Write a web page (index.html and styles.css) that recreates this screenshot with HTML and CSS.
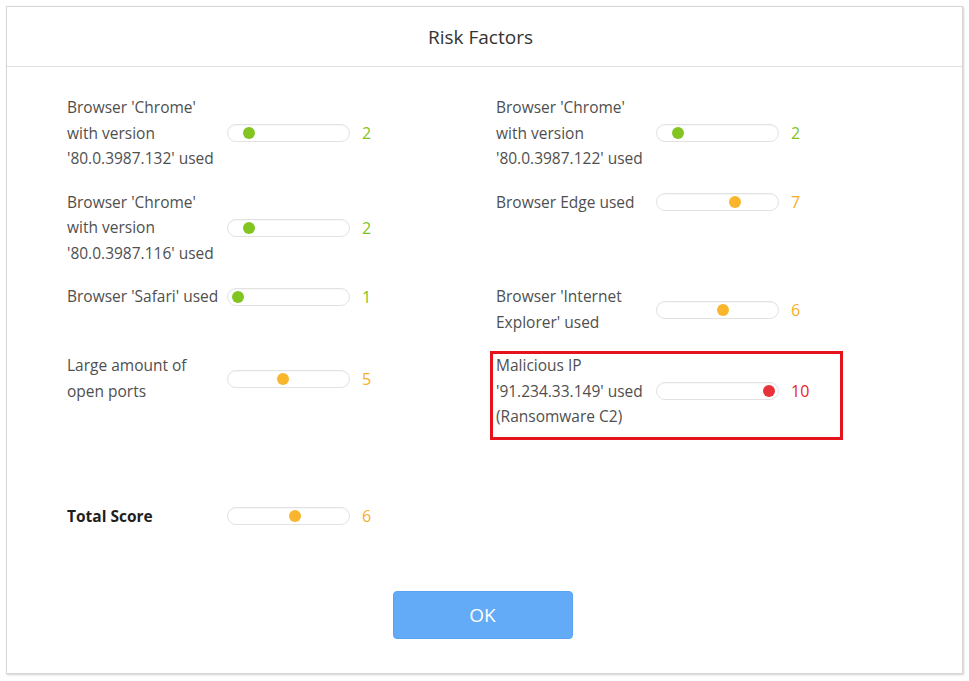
FILE: index.html
```html
<!DOCTYPE html>
<html>
<head>
<meta charset="utf-8">
<link rel="stylesheet" href="styles.css">
</head>
<body>
<div class="modal">
  <div class="modal-header">Risk Factors</div>
  <div class="modal-body">
    <div class="grid">
      <div class="factor">
        <div class="label">Browser 'Chrome' with version '80.0.3987.132' used</div>
        <div class="track"><span class="dot green" style="left:15px"></span></div>
        <div class="value green-t">2</div>
      </div>
      <div class="factor">
        <div class="label">Browser 'Chrome' with version '80.0.3987.122' used</div>
        <div class="track"><span class="dot green" style="left:15px"></span></div>
        <div class="value green-t">2</div>
      </div>
      <div class="factor">
        <div class="label">Browser 'Chrome' with version '80.0.3987.116' used</div>
        <div class="track"><span class="dot green" style="left:15px"></span></div>
        <div class="value green-t">2</div>
      </div>
      <div class="factor">
        <div class="label">Browser Edge used</div>
        <div class="track"><span class="dot orange" style="left:72px"></span></div>
        <div class="value orange-t">7</div>
      </div>
      <div class="factor">
        <div class="label">Browser 'Safari' used</div>
        <div class="track"><span class="dot green" style="left:4px"></span></div>
        <div class="value green-t">1</div>
      </div>
      <div class="factor">
        <div class="label">Browser 'Internet Explorer' used</div>
        <div class="track"><span class="dot orange" style="left:60px"></span></div>
        <div class="value orange-t">6</div>
      </div>
      <div class="factor">
        <div class="label">Large amount of open ports</div>
        <div class="track"><span class="dot orange" style="left:49px"></span></div>
        <div class="value orange-t">5</div>
      </div>
      <div class="factor flagged">
        <div class="label">Malicious IP '91.234.33.149' used (Ransomware C2)</div>
        <div class="track"><span class="dot red" style="left:106px"></span></div>
        <div class="value red-t">10</div>
        <span class="highlight"></span>
      </div>
    </div>
    <div class="factor total">
      <div class="label">Total Score</div>
      <div class="track"><span class="dot orange" style="left:61px"></span></div>
      <div class="value orange-t">6</div>
    </div>
    <div class="actions">
      <button class="btn-ok">OK</button>
    </div>
  </div>
</div>
</body>
</html>
```

FILE: styles.css
```css
* { box-sizing: border-box; }
html, body { margin: 0; padding: 0; background: #ffffff; }
body {
  font-family: "Open Sans", "Lato", sans-serif;
  color: #4f4f4f;
  padding: 6px;
}
.modal {
  width: 957px;
  height: 668px;
  background: #ffffff;
  border: 1px solid #d6d6d6;
  box-shadow: 1px 1px 2px rgba(0,0,0,0.18);
  display: flex;
  flex-direction: column;
}
.modal-header {
  height: 60px;
  border-bottom: 1px solid #e0e0e0;
  display: flex;
  align-items: center;
  justify-content: center;
  font-size: 19px;
  color: #333333;
  padding-right: 8px;
}
.modal-body {
  padding: 28px 0 0 60px;
  display: flex;
  flex-direction: column;
}
.grid {
  display: grid;
  grid-template-columns: 429px 1fr;
  row-gap: 18px;
  align-items: start;
}
.factor {
  display: flex;
  align-items: center;
  position: relative;
}
.label {
  width: 160px;
  font-size: 15.5px;
  line-height: 25.5px;
  padding-right: 4px;
}
.track {
  position: relative;
  width: 123px;
  height: 18px;
  border: 1px solid #e2e2e2;
  border-radius: 9px;
  background: #ffffff;
  box-shadow: inset 0 1px 1px rgba(0,0,0,0.03);
}
.dot {
  position: absolute;
  top: 2px;
  width: 12px;
  height: 12px;
  border-radius: 50%;
}
.dot.green { background: #82c520; }
.dot.orange { background: #f9b62c; }
.dot.red { background: #e8323a; }
.value {
  margin-left: 12px;
  font-size: 16px;
}
.green-t { color: #7fc21f; }
.orange-t { color: #f6ae1e; }
.red-t { color: #e8232a; }
.highlight {
  position: absolute;
  left: -6px;
  top: -2px;
  width: 353px;
  height: 89px;
  border: 3px solid #e5141c;
  pointer-events: none;
}
.total {
  margin-top: 74px;
}
.total .label {
  font-weight: 700;
  color: #1e1e1e;
}
.actions {
  display: flex;
  justify-content: center;
  padding-right: 60px;
  margin-top: 62px;
}
.btn-ok {
  width: 180px;
  height: 48px;
  background: #63abf7;
  border: 1px solid #5aa3f0;
  border-radius: 4px;
  color: #ffffff;
  font-family: "Open Sans", sans-serif;
  font-size: 19px;
  margin-left: -4px;
}
```
